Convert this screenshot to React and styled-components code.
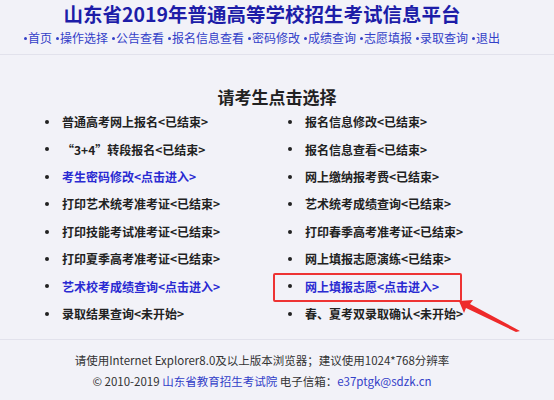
import React from 'react'
import styled, { createGlobalStyle } from 'styled-components'

const GlobalStyle = createGlobalStyle`
  html, body {
    margin: 0;
    padding: 0;
    background: #f2f2f8;
  }
  body {
    font-family: "Noto Sans CJK SC", "Noto Sans", sans-serif;
    color: #222;
  }
`

const navItems = ['首页', '操作选择', '公告查看', '报名信息查看', '密码修改', '成绩查询', '志愿填报', '录取查询', '退出']

const rows = [
  [{ t: '普通高考网上报名<已结束>' }, { t: '报名信息修改<已结束>' }],
  [{ t: '“3+4”转段报名<已结束>' }, { t: '报名信息查看<已结束>' }],
  [{ t: '考生密码修改<点击进入>', link: true }, { t: '网上缴纳报考费<已结束>' }],
  [{ t: '打印艺术统考准考证<已结束>' }, { t: '艺术统考成绩查询<已结束>' }],
  [{ t: '打印技能考试准考证<已结束>' }, { t: '打印春季高考准考证<已结束>' }],
  [{ t: '打印夏季高考准考证<已结束>' }, { t: '网上填报志愿演练<已结束>' }],
  [{ t: '艺术校考成绩查询<点击进入>', link: true }, { t: '网上填报志愿<点击进入>', link: true, marked: true }],
  [{ t: '录取结果查询<未开始>' }, { t: '春、夏考双录取确认<未开始>' }],
]

const App = () => {
  return (
    <Page>
      <GlobalStyle />
      <Header>
        <Title>山东省2019年普通高等学校招生考试信息平台</Title>
        <Nav>
          {navItems.map((n) => (
            <NavLink key={n}>{n}</NavLink>
          ))}
        </Nav>
      </Header>

      <Main>
        <Heading>请考生点击选择</Heading>
        <List>
          {rows.flat().map((item, i) => (
            <Item key={i} $link={item.link} $marked={item.marked}>
              {item.t}
            </Item>
          ))}
        </List>
        <Arrow viewBox="0 0 70 40" width="70" height="40">
          <polygon points="2,9 16,8 13,12 63,39 59,40 9,16 7,21" fill="#ee2a2a" />
        </Arrow>
      </Main>

      <Footer>
        <FootLine>请使用Internet Explorer8.0及以上版本浏览器；建议使用1024*768分辨率</FootLine>
        <FootLine>
          © 2010-2019 <FootLink>山东省教育招生考试院</FootLink> 电子信箱：<FootLink>e37ptgk@sdzk.cn</FootLink>
        </FootLine>
      </Footer>
    </Page>
  )
}

export default App

const Page = styled.div`
  width: 554px;
  min-height: 400px;
  background: #f2f2f8;
`

const Header = styled.header`
  height: 55px;
  padding: 2px 30px 0 0;
  box-sizing: border-box;
  border-bottom: 1px solid #e2e2ec;
  text-align: center;
`

const Title = styled.h1`
  margin: 0;
  font-size: 19.5px;
  line-height: 24px;
  font-weight: bold;
  color: #1d1da8;
`

const Nav = styled.nav`
  margin-top: 4px;
  display: flex;
  justify-content: center;
  gap: 4px;
  font-size: 12px;
  line-height: 16px;
`

const NavLink = styled.a`
  display: flex;
  align-items: center;
  color: #3340c8;
  cursor: pointer;

  &::before {
    content: "";
    width: 3px;
    height: 3px;
    margin-right: 1px;
    border-radius: 50%;
    background: #3340c8;
  }
`

const Main = styled.main`
  position: relative;
  padding: 32px 0 12px;
  border-bottom: 1px solid #e2e2ec;
`

const Heading = styled.h2`
  margin: 0 0 1px;
  font-size: 17px;
  line-height: 20px;
  font-weight: bold;
  text-align: center;
  color: #222;
`

const List = styled.ul`
  margin: 0 0 0 40px;
  padding: 0;
  width: 486px;
  list-style: none;
  display: grid;
  grid-template-columns: 243px 243px;
  grid-auto-rows: 27.4px;
`

const Item = styled.li`
  position: relative;
  display: flex;
  align-items: center;
  padding-left: 22px;
  font-size: 12px;
  font-weight: bold;
  color: ${(p) => (p.$link ? '#2a2ad2' : '#222')};
  cursor: ${(p) => (p.$link ? 'pointer' : 'default')};

  &::before {
    content: "";
    position: absolute;
    left: 5px;
    top: 12px;
    width: 4px;
    height: 4px;
    border-radius: 50%;
    background: #222;
  }

  ${(p) =>
    p.$marked &&
    `
    &::after {
      content: "";
      position: absolute;
      left: -10px;
      top: 1px;
      width: 185px;
      height: 25px;
      border: 2px solid #e33;
      border-radius: 2px;
    }
  `}
`

const Arrow = styled.svg`
  position: absolute;
  left: 457px;
  top: 237px;
`

const Footer = styled.footer`
  padding: 10px 30px 0 0;
  text-align: center;
`

const FootLine = styled.div`
  font-size: 11.5px;
  line-height: 21px;
  color: #333;
`

const FootLink = styled.a`
  color: #3340c8;
  cursor: pointer;
`
